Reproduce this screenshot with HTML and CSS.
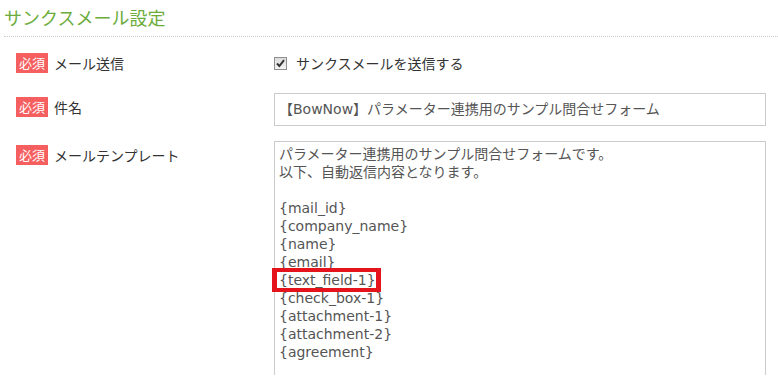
FILE: index.html
```html
<!DOCTYPE html>
<html lang="ja">
<head>
  <meta charset="UTF-8" />
  <title>サンクスメール設定</title>
  <link rel="stylesheet" href="styles.css">
</head>
<body>

  <h2 class="section-title">サンクスメール設定</h2>

  <div class="form">
    <div class="row row-check">
      <div class="label"><span class="badge">必須</span>メール送信</div>
      <div class="field">
        <label class="check">
          <span class="check-box">
            <svg width="9" height="9" viewBox="0 0 9 9"><path d="M1 4.5 L3.4 7 L8 1.2" fill="none" stroke="#333" stroke-width="2"/></svg>
          </span>
          サンクスメールを送信する
        </label>
      </div>
    </div>

    <div class="row">
      <div class="label"><span class="badge">必須</span>件名</div>
      <div class="field">
        <div class="input">【BowNow】パラメーター連携用のサンプル問合せフォーム</div>
      </div>
    </div>

    <div class="row">
      <div class="label"><span class="badge">必須</span>メールテンプレート</div>
      <div class="field">
        <div class="textarea">パラメーター連携用のサンプル問合せフォームです。
以下、自動返信内容となります。

{mail_id}
{company_name}
{name}
{email}
<span class="mark">{text_field-1}</span>
{check_box-1}
{attachment-1}
{attachment-2}
{agreement}</div>
      </div>
    </div>
  </div>

</body>
</html>
```

FILE: styles.css
```css
body {
    margin: 0;
    font-family: "DejaVu Sans", "Noto Sans CJK JP", sans-serif;
    font-size: 14px;
    color: #333;
    background: #fff;
}

.section-title {
    margin: 0 0 0 4px;
    height: 36px;
    line-height: 34px;
    font-size: 18px;
    font-weight: normal;
    color: #6cac3c;
    border-bottom: 1px dotted #ccc;
    font-family: "Noto Sans CJK JP", sans-serif;
}

.form {
    padding: 11px 0 0 16px;
}

.row {
    display: grid;
    grid-template-columns: 258px 492px;
    align-items: start;
    margin-bottom: 15px;
}

.row-check {
    align-items: center;
}

.row-check .label {
    padding-top: 0;
}

.row-check .field {
    height: 30px;
    display: flex;
    align-items: center;
}

.label {
    display: flex;
    align-items: center;
    padding-top: 4px;
    font-family: "Noto Sans CJK JP", sans-serif;
}

.badge {
    display: inline-block;
    background-color: #f65f5f;
    color: #fff;
    font-size: 13px;
    line-height: 20px;
    height: 20px;
    padding: 0 3px;
    margin-right: 6px;
}

.check {
    display: flex;
    align-items: center;
    font-family: "Noto Sans CJK JP", sans-serif;
}

.check-box {
    display: flex;
    align-items: center;
    justify-content: center;
    width: 11px;
    height: 11px;
    border: 1px solid #8f8f8f;
    background: linear-gradient(#dcdcdc, #f4f4f4);
    margin-right: 9px;
}

.input {
    box-sizing: border-box;
    height: 33px;
    line-height: 31px;
    border: 1px solid #ccc;
    padding: 0 4px;
    color: #555;
    white-space: nowrap;
}

.textarea {
    box-sizing: border-box;
    height: 234px;
    border: 1px solid #ccc;
    border-bottom: none;
    padding: 3px 4px;
    line-height: 18px;
    color: #555;
    white-space: pre;
}

.mark {
    position: relative;
}

.mark::after {
    content: "";
    position: absolute;
    left: -7px;
    right: -5px;
    top: -4px;
    bottom: -4px;
    border: 4px solid #e5141c;
    border-width: 4px 5px;
}
```
